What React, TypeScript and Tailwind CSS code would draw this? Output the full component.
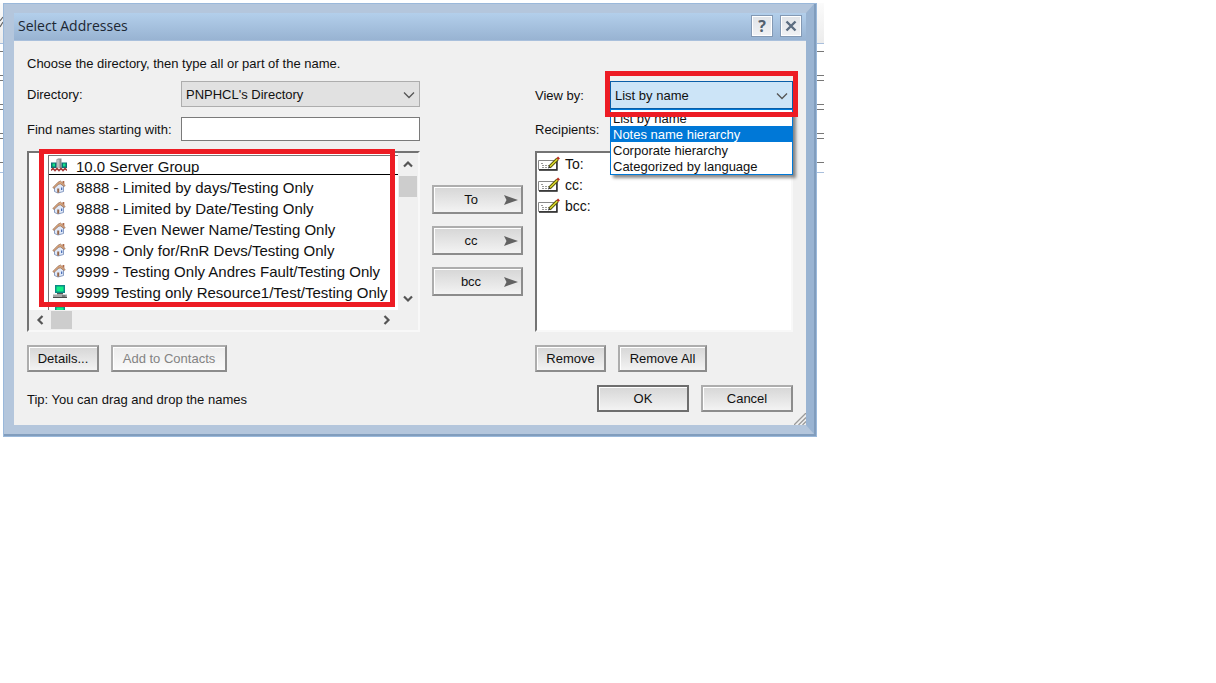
import type { ReactNode } from "react";
import clsx from "clsx";

type Entry = { name: string; kind: "person" | "resource" };

const entries: Entry[] = [
  { name: "8888 - Limited by days/Testing Only", kind: "person" },
  { name: "9888 - Limited by Date/Testing Only", kind: "person" },
  { name: "9988 - Even Newer Name/Testing Only", kind: "person" },
  { name: "9998 - Only for/RnR Devs/Testing Only", kind: "person" },
  { name: "9999 - Testing Only Andres Fault/Testing Only", kind: "person" },
  { name: "9999 Testing only Resource1/Test/Testing Only", kind: "resource" },
  { name: "", kind: "resource" },
];

const views = [
  "List by name",
  "Notes name hierarchy",
  "Corporate hierarchy",
  "Categorized by language",
];

function HouseIcon() {
  return (
    <svg width="14" height="14" viewBox="0 0 14 14" className="shrink-0">
      <path d="M2.500 7v4.500L6 13l5.500-1.500V6L8 3z" fill="#dfe8f8" stroke="#6f86b4" strokeWidth=".8" />
      <path d="M5.200 8.500h2v4.200h-2z" fill="#9a6a4c" />
      <path d="M9 7.500h1.300V10H9z" fill="#4f72b8" />
      <path d="M.8 7.500 6 2.200 8.500 1l4.700 4.500-.9 1L8.600 4 6.500 4.200 2 8.500z" fill="#d9a67c" stroke="#8a6048" strokeWidth=".6" />
      <path d="M10.500 1h1.800v3.200l-1.800-1.500z" fill="#b06a48" />
    </svg>
  );
}

function ComputerIcon() {
  return (
    <svg width="16" height="14" viewBox="0 0 16 14" className="shrink-0">
      <path d="M3 0h10v8H3z" fill="#0d8a86" />
      <path d="M4.500 1.500h7v5h-7z" fill="#12ee86" />
      <path d="M5 8h6v1.500H5z" fill="#555" />
      <path d="M1 9.500h14V13H1z" fill="#a5a5a5" />
      <path d="M1 12.500h14M10 11h3.500" stroke="#4a4a4a" />
    </svg>
  );
}

function ServerGroupIcon() {
  return (
    <svg width="16" height="14" viewBox="0 0 16 14" className="shrink-0">
      <path d="M5.500 1.500 7 .5h3.500V10h-5z" fill="#8c8c8c" />
      <path d="M5.500 1.500h3V10h-3z" fill="#bdbdbd" />
      <path d="M0 4.500h5.500v5.500H0zM10.500 4.500H16v5.500h-5.500z" fill="#0b6f75" />
      <path d="M1.500 5.500H4v3H1.500zM12 5.500h2.500v3H12z" fill="#12e286" />
      <path d="M0 12.500l2-2 2 2 2-2 2 2 2-2 2 2 2-2 2 2" fill="none" stroke="#a53d3d" strokeWidth="1.600" />
    </svg>
  );
}

function EnvelopeIcon() {
  return (
    <svg width="23" height="17" viewBox="0 0 23 17" className="shrink-0">
      <path d="M.5 4.500h18v9H.5z" fill="#fff" stroke="#888" />
      <path d="M1 14h18V5" fill="none" stroke="#222" strokeWidth="1.400" />
      <path d="M3 7.500h2M4 9.500h7M4 11.500h5" stroke="#999" strokeDasharray="2 1" />
      <path d="m11.500 11 8-8" stroke="#54540c" strokeWidth="3.200" />
      <path d="m12 10.500 7.500-7.500" stroke="#e0dc2c" strokeWidth="1.500" />
      <path d="m10 12.500.8-2.600 1.600 1.600z" fill="#222" />
      <path d="m19.300 3.200 1.700-1.700" stroke="#b83024" strokeWidth="2.600" />
    </svg>
  );
}

function Chevron({ className }: { className?: string }) {
  return (
    <svg width="12" height="8" viewBox="0 0 12 8" className={className}>
      <path d="M1 1.500 6 6.500l5-5" fill="none" stroke="#555" strokeWidth="1.300" />
    </svg>
  );
}

function ScrollArrow({ className }: { className?: string }) {
  return (
    <svg width="10" height="8" viewBox="0 0 10 8" className={className}>
      <path d="M1 6.500 5 2.500l4 4" fill="none" stroke="#555" strokeWidth="2.200" />
    </svg>
  );
}

type ButtonProps = {
  children: ReactNode;
  className?: string;
  disabled?: boolean;
  primary?: boolean;
};

function Button({ children, className, disabled, primary }: ButtonProps) {
  return (
    <button
      type="button"
      disabled={disabled}
      className={clsx(
        "h-[27px] border-2 bg-linear-to-b shadow-[inset_1px_1px_0_#fff]",
        primary
          ? "border-[#6e6e6e]"
          : "border-t-[#adadad] border-l-[#adadad] border-r-[#8c8c8c] border-b-[#8c8c8c]",
        disabled ? "from-[#ececec] to-[#fafafa] text-[#838383]" : "from-[#d6d6d6] to-[#f3f3f3]",
        className,
      )}
    >
      {children}
    </button>
  );
}

function SendButton({ children }: { children: ReactNode }) {
  return (
    <button
      type="button"
      className="grid h-[29px] grid-cols-[1fr_14px] items-center border-2 border-t-[#adadad] border-r-[#8c8c8c] border-b-[#8c8c8c] border-l-[#adadad] bg-linear-to-b from-[#d6d6d6] to-[#f3f3f3] pr-[3px] pl-1 shadow-[inset_1px_1px_0_#fff]"
    >
      <span>{children}</span>
      <svg width="14" height="10" viewBox="0 0 14 10">
        <path d="M0 0 14 5 0 10l2.500-5z" fill="#626262" />
      </svg>
    </button>
  );
}

function TitleButton({ label, children }: { label: string; children: ReactNode }) {
  return (
    <button
      type="button"
      aria-label={label}
      className="grid size-[22px] place-items-center border border-[#8399b4] bg-linear-to-b from-[#dfe3e8] to-[#f1f2f4] shadow-[inset_0_0_0_1px_#fff]"
    >
      {children}
    </button>
  );
}

function BackgroundWindow() {
  return (
    <div className="mt-[3px] w-full max-w-[824px] [grid-area:1/1]">
      <div className="h-[41px] border-b border-[#a9bfdc] bg-linear-to-b from-[#fbfbfb] to-[#ececec] pt-3">
        <svg width="4" height="14" viewBox="0 0 4 14">
          <path d="M0 6l3-4M0 12l3-5" stroke="#666" strokeWidth="1.200" />
        </svg>
      </div>
      <div className="flex flex-col gap-1 border-b border-[#a9bfdc] pt-[7px] pb-[9px]">
        {[0, 1, 2, 3].map((row) => (
          <div key={row} className="h-[25px] border-y border-[#777]" />
        ))}
      </div>
    </div>
  );
}

function TitleBar() {
  return (
    <div className="flex h-7 items-center justify-between border-b border-[#a9c0dc] bg-linear-to-b from-[#b3cfeb] to-[#98b3d2] pr-1 pb-[2px] pl-1">
      <h1 className="font-['Open_Sans',sans-serif] text-[14px] text-[#1c2733]">Select Addresses</h1>
      <div className="flex gap-[7px]">
        <TitleButton label="Help">
          <span className="font-['Open_Sans',sans-serif] text-[16px] leading-4 font-bold text-[#52606e]">
            ?
          </span>
        </TitleButton>
        <TitleButton label="Close">
          <svg width="12" height="12" viewBox="0 0 12 12">
            <path d="m1.500 1.500 9 9m0-9-9 9" stroke="#5a6c80" strokeWidth="2.400" />
          </svg>
        </TitleButton>
      </div>
    </div>
  );
}

function DirectoryList() {
  return (
    <div className="relative mt-[10px]">
      <div className="grid h-[181px] grid-cols-[1fr_20px] grid-rows-[1fr_20px] border-2 border-t-[#747474] border-r-[#f8f8f8] border-b-[#f8f8f8] border-l-[#747474]">
        <div className="overflow-hidden bg-white pt-[2px] pl-[19px]">
          <div className="border-l border-[#777] text-[15px]">
            <div className="flex h-5 items-center gap-[9px] border-t border-b border-t-[#777] border-b-black pl-[2px]">
              <ServerGroupIcon />
              <span className="pt-1 leading-4 whitespace-nowrap">10.0 Server Group</span>
            </div>
            <ul className="pt-[3px]">
              {entries.map((entry) => (
                <li key={entry.name} className="flex h-[21px] items-center pl-[2px]">
                  <span className="flex w-[25px] pb-1 pl-[1px]">
                    {entry.kind === "person" ? <HouseIcon /> : <ComputerIcon />}
                  </span>
                  <span className="whitespace-nowrap">{entry.name}</span>
                </li>
              ))}
            </ul>
          </div>
        </div>
        <div className="flex flex-col items-center justify-between py-[7px]">
          <ScrollArrow />
          <div className="mt-2 mb-auto h-[21px] w-[18px] bg-[#cdcdcd]" />
          <ScrollArrow className="rotate-180" />
        </div>
        <div className="flex items-center justify-between pr-[6px] pl-[6px]">
          <ScrollArrow className="-rotate-90" />
          <div className="mr-auto ml-[6px] h-[18px] w-[21px] bg-[#cdcdcd]" />
          <ScrollArrow className="rotate-90" />
        </div>
      </div>
      <div className="pointer-events-none absolute -top-[2px] right-[25px] bottom-[25px] left-3 border-[5px] border-[#ed1c24]" />
    </div>
  );
}

function ViewPicker() {
  return (
    <div className="flex h-7 items-center">
      <label htmlFor="view" className="w-[75px] pt-[2px]">
        View by:
      </label>
      <div className="relative h-7 flex-1">
        <select
          id="view"
          defaultValue="List by name"
          className="h-full w-full appearance-none border border-[#0a5ea8] bg-[#cce4f7] px-1 pt-[2px] outline-none"
        >
          {views.map((view) => (
            <option key={view}>{view}</option>
          ))}
        </select>
        <Chevron className="pointer-events-none absolute top-[11px] right-[5px]" />
        <ul
          role="listbox"
          aria-label="View by"
          className="absolute inset-x-0 top-7 border border-[#0078d7] bg-white shadow-[3px_3px_3px_rgba(0,0,0,0.45)]"
        >
          {views.map((view) => (
            <li
              key={view}
              role="option"
              aria-selected={view === "Notes name hierarchy"}
              className={clsx(
                "h-4 pl-[2px] leading-[17px]",
                view === "Notes name hierarchy" && "bg-[#0078d7] text-white",
              )}
            >
              {view}
            </li>
          ))}
        </ul>
        <div className="pointer-events-none absolute -inset-x-[5px] -top-[10px] -bottom-2 border-[5px] border-[#ed1c24]" />
      </div>
    </div>
  );
}

function AddressDialog() {
  return (
    <section
      role="dialog"
      aria-label="Select Addresses"
      className="mt-[3px] ml-[3px] max-w-[814px] self-start border border-[#9ab8da] [grid-area:1/1]"
    >
      <div className="border-r-2 border-b-2 border-[#819dbd]">
        <div className="border-t-[9px] border-r-8 border-b-[9px] border-l-[10px] border-t-[#b4c6dc] border-r-[#9ab4d2] border-b-[#b4c6dc] border-l-[#b4c6dc]">
          <TitleBar />
          <div className="relative bg-[#f0f0f0] px-[13px] pt-[14px] pb-[13px]">
            <p className="leading-[17px]">Choose the directory, then type all or part of the name.</p>

            <div className="mt-[9px] grid grid-cols-[1fr_91px_258px] gap-x-3">
              <div>
                <div className="grid grid-cols-[154px_1fr] items-center gap-y-[10px]">
                  <label htmlFor="directory" className="pt-[2px]">
                    Directory:
                  </label>
                  <div className="relative">
                    <select
                      id="directory"
                      className="block h-[26px] w-full appearance-none border border-[#adadad] bg-[#e1e1e1] px-1 pt-[2px] outline-none"
                    >
                      <option>PNPHCL's Directory</option>
                    </select>
                    <Chevron className="pointer-events-none absolute top-[10px] right-[5px]" />
                  </div>
                  <label htmlFor="find" className="pt-[2px]">
                    Find names starting with:
                  </label>
                  <input id="find" type="text" className="h-6 w-full border border-[#7a7a7a] bg-white px-1" />
                </div>
                <DirectoryList />
                <div className="mt-[13px] flex gap-3">
                  <Button className="w-[72px]">Details...</Button>
                  <Button className="w-[116px]" disabled>
                    Add to Contacts
                  </Button>
                </div>
              </div>

              <div className="flex flex-col gap-3 pt-[104px]">
                <SendButton>To</SendButton>
                <SendButton>cc</SendButton>
                <SendButton>bcc</SendButton>
              </div>

              <div>
                <ViewPicker />
                <h2 className="mt-2 h-6 leading-[26px]">Recipients:</h2>
                <ul className="mt-[10px] h-[181px] border-2 border-t-[#747474] border-r-[#f8f8f8] border-b-[#f8f8f8] border-l-[#747474] bg-white pt-[1px] pl-[1px] text-[14px]">
                  {["To:", "cc:", "bcc:"].map((field) => (
                    <li key={field} className="flex h-[21px] items-center gap-1">
                      <EnvelopeIcon />
                      <span>{field}</span>
                    </li>
                  ))}
                </ul>
                <div className="mt-[13px] flex gap-3">
                  <Button className="w-[71px]">Remove</Button>
                  <Button className="w-[89px]">Remove All</Button>
                </div>
              </div>
            </div>

            <div className="mt-[13px] flex items-center justify-between">
              <p className="pt-[2px]">Tip: You can drag and drop the names</p>
              <div className="flex gap-3">
                <Button className="w-[92px]" primary>
                  OK
                </Button>
                <Button className="w-[92px]">Cancel</Button>
              </div>
            </div>

            <svg width="12" height="12" viewBox="0 0 12 12" className="absolute right-0 bottom-0">
              <path d="M0 12 12 0M4.500 12 12 4.500M8.500 12 12 8.500" stroke="#9a9a9a" strokeWidth="1.300" />
            </svg>
          </div>
        </div>
      </div>
    </section>
  );
}

export default function App() {
  return (
    <main className="grid min-h-screen content-start bg-white font-['Liberation_Sans',Arial,sans-serif] text-[13px] text-[#111]">
      <BackgroundWindow />
      <AddressDialog />
    </main>
  );
}
